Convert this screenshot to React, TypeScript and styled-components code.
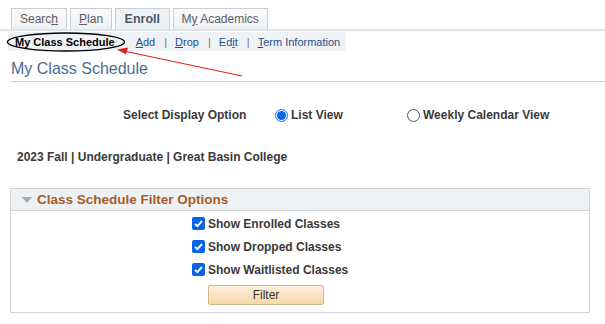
import React from "react";
import styled, { createGlobalStyle } from "styled-components";

const GlobalStyle = createGlobalStyle`
  body {
    margin: 0;
    background: #ffffff;
    font-family: "Liberation Sans", Arial, sans-serif;
    color: #333333;
  }
`;

const Page = styled.div`
  position: relative;
  width: 605px;
  height: 324px;
  overflow: hidden;
`;

const TabBar = styled.div`
  display: flex;
  gap: 3px;
  padding: 8px 0 0 11px;
  border-bottom: 2px solid #dde4ea;
`;

const Tab = styled.div<{ $active?: boolean }>`
  display: flex;
  align-items: center;
  justify-content: center;
  height: 20px;
  padding: 0 ${(p) => (p.$active ? 8.5 : 8)}px;
  border: 1px solid #c7ced6;
  border-bottom: none;
  background: ${(p) => (p.$active ? "#eef1f4" : "linear-gradient(#fafafa, #eef0f2)")};
  font-size: ${(p) => (p.$active ? 12.5 : 12)}px;
  font-weight: ${(p) => (p.$active ? 700 : 400)};
  color: ${(p) => (p.$active ? "#4c5866" : "#5a5f66")};
  white-space: pre;
  u {
    text-decoration: underline;
  }
`;

const SubMenu = styled.div`
  display: inline-flex;
  align-items: center;
  height: 19px;
  margin: 1px 0 0 8px;
  padding: 0 6px 0 7px;
  background: #f0f3f6;
  font-size: 11px;
`;

const Current = styled.span`
  font-weight: 700;
  color: #000000;
  margin-right: 21px;
`;

const SubLink = styled.span`
  color: #1f4f8a;
  u {
    text-decoration: underline;
  }
`;

const Sep = styled.span`
  color: #6a7380;
  margin: 0 8px 0 9px;
`;

const Heading = styled.div`
  margin: 9px 0 0 11px;
  padding-bottom: 3px;
  border-bottom: 1px solid #c8c8c8;
  font-size: 16px;
  color: #4b6d94;
`;

const DisplayRow = styled.div`
  display: flex;
  align-items: center;
  margin-top: 26px;
  padding-left: 123px;
  font-size: 12px;
  font-weight: 700;
  color: #3a3a3a;
`;

const Label = styled.span`
  width: 152px;
`;

const RadioItem = styled.label<{ $w: number }>`
  display: flex;
  align-items: center;
  gap: 3px;
  width: ${(p) => p.$w}px;
`;

const Radio = styled.span<{ $on?: boolean }>`
  box-sizing: border-box;
  width: 13px;
  height: 13px;
  border-radius: 50%;
  border: 1px solid ${(p) => (p.$on ? "#0d6efd" : "#555")};
  background: #fff;
  display: flex;
  align-items: center;
  justify-content: center;
  &::after {
    content: "";
    display: ${(p) => (p.$on ? "block" : "none")};
    width: 9px;
    height: 9px;
    border-radius: 50%;
    background: #0b63e5;
  }
`;

const Term = styled.div`
  margin: 28px 0 0 17px;
  font-size: 12px;
  font-weight: 700;
  color: #3a3a3a;
`;

const Panel = styled.div`
  margin: 24px 15px 0 10px;
  border: 1px solid #cfd4d9;
`;

const PanelHead = styled.div`
  display: flex;
  align-items: center;
  gap: 5px;
  height: 21px;
  padding-left: 11px;
  background: #eff2f4;
  border-bottom: 1px solid #cfd4d9;
  font-size: 13.5px;
  font-weight: 700;
  color: #a65d27;
`;

const Triangle = styled.span`
  width: 0;
  height: 0;
  border-left: 5px solid transparent;
  border-right: 5px solid transparent;
  border-top: 6px solid #a7a9ac;
`;

const PanelBody = styled.div`
  display: flex;
  flex-direction: column;
  align-items: flex-start;
  padding: 6px 0 7px 181px;
  gap: 10px;
`;

const CheckRow = styled.label`
  display: flex;
  align-items: center;
  gap: 3px;
  height: 13px;
  font-size: 12px;
  font-weight: 700;
  color: #3a3a3a;
`;

const Box = styled.span`
  display: flex;
  align-items: center;
  justify-content: center;
  width: 13px;
  height: 13px;
  border-radius: 2px;
  background: #0b63e5;
`;

const FilterButton = styled.button`
  margin: -1px 0 0 16px;
  width: 116px;
  height: 20px;
  border: 1px solid #d6b488;
  border-radius: 2px;
  background: linear-gradient(#fdf0de, #f9d7a8);
  font-family: "Liberation Sans", Arial, sans-serif;
  font-size: 12px;
  color: #333;
`;

const Annotation = styled.svg`
  position: absolute;
  left: 0;
  top: 0;
  pointer-events: none;
`;

const Check = () => (
  <svg width="11" height="11" viewBox="0 0 11 11">
    <path d="M2 5.8 L4.4 8.2 L9 3" stroke="#fff" strokeWidth="1.9" fill="none" />
  </svg>
);

const App: React.FC = () => {
  const checks = ["Show Enrolled Classes", "Show Dropped Classes", "Show Waitlisted Classes"];
  return (
    <Page>
      <GlobalStyle />
      <TabBar>
        <Tab>
          <span>
            Searc<u>h</u>
          </span>
        </Tab>
        <Tab>
          <span>
            <u>P</u>lan
          </span>
        </Tab>
        <Tab $active>Enroll</Tab>
        <Tab>
          <span>
            M<u>y</u> Academics
          </span>
        </Tab>
      </TabBar>
      <SubMenu>
        <Current>My Class Schedule</Current>
        <SubLink>
          <u>A</u>dd
        </SubLink>
        <Sep>|</Sep>
        <SubLink>
          <u>D</u>rop
        </SubLink>
        <Sep>|</Sep>
        <SubLink>
          Ed<u>i</u>t
        </SubLink>
        <Sep>|</Sep>
        <SubLink>
          <u>T</u>erm Information
        </SubLink>
      </SubMenu>
      <Heading>My Class Schedule</Heading>
      <DisplayRow>
        <Label>Select Display Option</Label>
        <RadioItem $w={132}>
          <Radio $on />
          List View
        </RadioItem>
        <RadioItem $w={160}>
          <Radio />
          Weekly Calendar View
        </RadioItem>
      </DisplayRow>
      <Term>2023 Fall | Undergraduate | Great Basin College</Term>
      <Panel>
        <PanelHead>
          <Triangle />
          Class Schedule Filter Options
        </PanelHead>
        <PanelBody>
          {checks.map((c) => (
            <CheckRow key={c}>
              <Box>
                <Check />
              </Box>
              {c}
            </CheckRow>
          ))}
          <FilterButton>Filter</FilterButton>
        </PanelBody>
      </Panel>
      <Annotation width="605" height="324">
        <ellipse cx="66" cy="42" rx="58.5" ry="9" fill="none" stroke="#000" strokeWidth="1.4" />
        <line x1="242" y1="76" x2="126" y2="51.5" stroke="#e02020" strokeWidth="1.2" />
        <polygon points="117,49.5 128,47.5 126,54.5" fill="#e02020" />
      </Annotation>
    </Page>
  );
};

export default App;
